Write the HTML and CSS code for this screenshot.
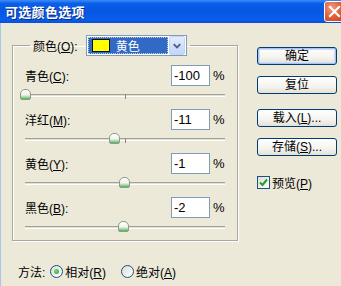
FILE: index.html
```html
<!DOCTYPE html>
<html>
<head>
<meta charset="utf-8">
<link rel="stylesheet" href="styles.css">
</head>
<body>
<div class="window">
  <div class="titlebar">
    <span class="title">可选颜色选项</span>
    <span class="close">
      <svg width="21" height="21" viewBox="0 0 21 21"><path d="M6 6 L15 15 M15 6 L6 15" stroke="#fff" stroke-width="2.2" stroke-linecap="square"/></svg>
    </span>
  </div>
  <div class="body">
    <div class="main">
      <fieldset class="group">
        <legend class="legend">
          <span class="lbl">颜色(<u>O</u>):</span>
          <span class="combo">
            <span class="combo-val"><span class="swatch"></span><span class="combo-text">黄色</span></span>
            <span class="combo-btn">
              <svg width="15" height="17" viewBox="0 0 15 17"><path d="M4 7 L7.5 10.5 L11 7" stroke="#4d6185" stroke-width="2" fill="none"/></svg>
            </span>
          </span>
        </legend>

        <div class="field">
          <div class="field-head"><span class="flabel">青色(<u>C</u>):</span><span class="box">-100</span><span class="pct">%</span></div>
          <div class="slider"><div class="track"></div><div class="tick"></div><div class="thumb" style="left:0%"></div></div>
        </div>
        <div class="field">
          <div class="field-head"><span class="flabel">洋红(<u>M</u>):</span><span class="box">-11</span><span class="pct">%</span></div>
          <div class="slider"><div class="track"></div><div class="tick"></div><div class="thumb" style="left:44.5%"></div></div>
        </div>
        <div class="field">
          <div class="field-head"><span class="flabel">黄色(<u>Y</u>):</span><span class="box">-1</span><span class="pct">%</span></div>
          <div class="slider"><div class="track"></div><div class="tick"></div><div class="thumb" style="left:49.5%"></div></div>
        </div>
        <div class="field">
          <div class="field-head"><span class="flabel">黑色(<u>B</u>):</span><span class="box">-2</span><span class="pct">%</span></div>
          <div class="slider last"><div class="track"></div><div class="tick"></div><div class="thumb" style="left:49%"></div></div>
        </div>
      </fieldset>
      <div class="method">
        <span class="mlabel">方法:</span>
        <span class="radio checked"></span><span class="rtext">相对(<u>R</u>)</span>
        <span class="radio"></span><span class="rtext">绝对(<u>A</u>)</span>
      </div>
    </div>
    <div class="side">
      <div class="btn default">确定</div>
      <div class="btn">复位</div>
      <div class="btn gap">载入(<u>L</u>)...</div>
      <div class="btn">存储(<u>S</u>)...</div>
      <div class="check-row">
        <span class="checkbox"><svg width="11" height="11" viewBox="0 0 11 11"><path d="M2 5.5 L4.5 8 L9 2.5" stroke="#21a121" stroke-width="2" fill="none"/></svg></span>
        <span class="ctext">预览(<u>P</u>)</span>
      </div>
    </div>
  </div>
</div>
</body>
</html>
```

FILE: styles.css
```css
html, body {
  margin: 0;
  padding: 0;
}
body {
  width: 341px;
  height: 286px;
  overflow: hidden;
  background: #ece9d8;
  font-family: "Liberation Sans", "Noto Sans CJK SC", sans-serif;
  font-size: 12px;
  color: #000;
}
u { text-decoration: underline; text-underline-offset: 1px; }

.window {
  width: 341px;
  height: 286px;
  display: flex;
  flex-direction: column;
}

.titlebar {
  height: 23px;
  flex: none;
  display: flex;
  align-items: center;
  padding-left: 5px;
  background: linear-gradient(to bottom, #3d8cf8 0%, #0a5fe8 15%, #0656e4 50%, #0a5ee9 85%, #0b4fd8 100%);
}
.title {
  color: #fff;
  font-family: "Noto Sans CJK SC", sans-serif;
  font-weight: bold;
  font-size: 13px;
  letter-spacing: 0.3px;
  text-shadow: 1px 1px 0 #0a2a8a;
}
.close {
  margin-left: auto;
  margin-right: -4px;
  width: 21px;
  height: 21px;
  box-sizing: border-box;
  border: 1px solid #fff;
  border-radius: 3px;
  background: radial-gradient(circle at 35% 30%, #f29b7e 0%, #e3643f 45%, #c2401e 100%);
  display: flex;
}
.close svg { display: block; margin: -1px; }

.body {
  flex: 1;
  display: flex;
  padding: 12px 0 0 11px;
  border-left: 1px solid #a7c6ee;
}

.main {
  width: 226px;
  display: flex;
  flex-direction: column;
}

.group {
  margin: 0;
  padding: 9px 12px 0 12px;
  border: 1px solid #aca899;
  box-shadow: inset 1px 1px 0 #fff, 1px 1px 0 #fff;
  min-width: 0;
}
.legend {
  display: flex;
  align-items: center;
  gap: 8px;
  margin-left: 5px;
  padding: 0 3px;
}
.combo {
  width: 101px;
  height: 21px;
  box-sizing: border-box;
  border: 1px solid #7f9db9;
  background: #fff;
  display: flex;
  align-items: center;
  padding: 1px;
  gap: 0;
}
.combo-val {
  flex: 1;
  height: 17px;
  box-sizing: border-box;
  background: #316ac5;
  border: 1px dotted #000;
  outline: 1px dotted #ccc;
  outline-offset: -1px;
  display: flex;
  align-items: center;
  padding-left: 3px;
  gap: 6px;
  margin-right: 1px;
}
.swatch {
  width: 18px;
  height: 13px;
  box-sizing: border-box;
  border: 1px solid #111;
  background: #ffff00;
}
.combo-text {
  color: #fff;
  font-family: "Noto Sans CJK SC", sans-serif;
  font-size: 12px;
}
.combo-btn {
  width: 16px;
  height: 19px;
  box-sizing: border-box;
  border: 1px solid #c4d4f7;
  border-radius: 2px;
  background: linear-gradient(to bottom, #e3ebfe, #c4d5fa);
  display: flex;
  align-items: center;
  justify-content: center;
}

.field-head {
  display: flex;
  align-items: center;
  height: 21px;
}
.flabel { flex: 1; }
.box {
  width: 39px;
  height: 21px;
  box-sizing: border-box;
  border: 1px solid #7f9db9;
  background: #fff;
  font-size: 13px;
  line-height: 19px;
  padding-left: 2px;
}
.pct {
  width: 12px;
  margin-left: 3px;
  font-size: 13px;
}

.slider {
  position: relative;
  height: 23px;
}
.slider.last { height: 22px; }
.track {
  position: relative;
  top: 8px;
  height: 3px;
  box-sizing: border-box;
  border-top: 1px solid #a3a197;
  border-bottom: 1px solid #fff;
  background: #e2e0d3;
}
.tick {
  position: absolute;
  left: 100px;
  top: 8px;
  width: 1px;
  height: 5px;
  background: #8a8778;
}
.thumb {
  position: absolute;
  top: 3px;
  width: 11px;
  height: 11px;
  margin-left: -5px;
  box-sizing: border-box;
  border: 1px solid #8c9b8c;
  border-radius: 5px 5px 2px 2px;
  background: linear-gradient(to bottom, #ffffff 0%, #f2f2ec 55%, #9ad39a 80%, #4fb34f 100%);
}

.method {
  display: flex;
  align-items: center;
  padding-top: 22px;
  padding-left: 6px;
  height: 16px;
}
.mlabel { margin-right: 5px; }
.radio {
  width: 13px;
  height: 13px;
  box-sizing: border-box;
  border-radius: 50%;
  border: 1px solid #1c5180;
  background: linear-gradient(135deg, #dcdcd6, #fff);
  margin-right: 2px;
  display: flex;
  align-items: center;
  justify-content: center;
}
.radio.checked::after {
  content: "";
  width: 5px;
  height: 5px;
  border-radius: 50%;
  background: radial-gradient(circle at 40% 40%, #7fd57f, #21a121);
}
.rtext { margin-right: 15px; }

.side {
  margin-left: 19px;
  width: 80px;
  display: flex;
  flex-direction: column;
  padding-top: 12px;
}
.btn {
  height: 18px;
  box-sizing: border-box;
  border: 1px solid #003c74;
  border-radius: 3px;
  background: linear-gradient(to bottom, #ffffff 0%, #f4f3ee 60%, #e3e1d6 100%);
  display: flex;
  align-items: center;
  justify-content: center;
  margin-bottom: 11px;
  line-height: 16px;
}
.btn.default {
  box-shadow: inset 0 0 0 1px #a9c2f2, inset 0 0 0 2px #cedcf8;
}
.btn.gap { margin-top: 4px; }
.check-row {
  display: flex;
  align-items: center;
  margin-top: 7px;
}
.checkbox {
  width: 13px;
  height: 13px;
  box-sizing: border-box;
  border: 1px solid #1c5180;
  background: linear-gradient(135deg, #dcdcd6, #fff);
  display: flex;
  align-items: center;
  justify-content: center;
  margin-right: 2px;
}
```
